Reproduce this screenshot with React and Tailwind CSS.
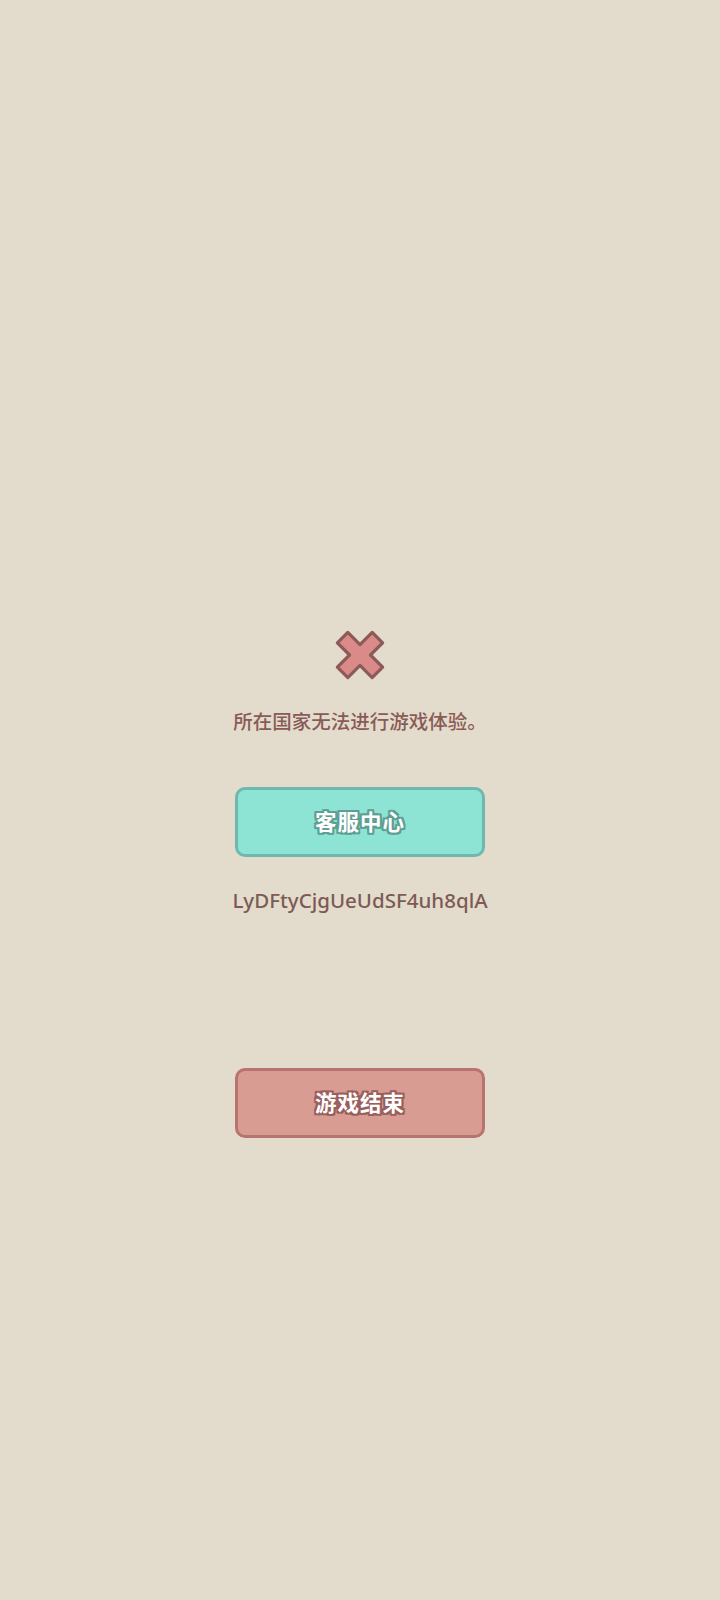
import React from 'react'

function CrossIcon() {
  return (
    <svg width="64" height="64" viewBox="0 0 52 52">
      <g transform="rotate(45 26 26)">
        <path
          d="M20 6 H32 V20 H46 V32 H32 V46 H20 V32 H6 V20 H20 Z"
          fill="#da8a88"
          stroke="#8c5a58"
          strokeWidth="2.6"
          strokeLinejoin="round"
        />
      </g>
    </svg>
  )
}

const outlineTeal = '[text-shadow:-2px_-2px_0_#5e9f93,2px_-2px_0_#5e9f93,-2px_2px_0_#5e9f93,2px_2px_0_#5e9f93,0_-2px_0_#5e9f93,0_2px_0_#5e9f93,-2px_0_0_#5e9f93,2px_0_0_#5e9f93]'
const outlineRed = '[text-shadow:-2px_-2px_0_#9a5f5c,2px_-2px_0_#9a5f5c,-2px_2px_0_#9a5f5c,2px_2px_0_#9a5f5c,0_-2px_0_#9a5f5c,0_2px_0_#9a5f5c,-2px_0_0_#9a5f5c,2px_0_0_#9a5f5c]'

export default function App() {
  return (
    <div className="w-[720px] h-[1600px] bg-[#e3dccc] flex flex-col items-center font-['Noto_Sans','Noto_Sans_CJK_SC',sans-serif]">
      <div className="mt-[623px]">
        <CrossIcon />
      </div>
      <p className="mt-[22px] text-[19.5px] leading-[26px] font-medium text-[#8a5b56]">所在国家无法进行游戏体验。</p>
      <button className={`mt-[52px] w-[250px] h-[70px] rounded-[10px] bg-[#8ee4d4] border-[3px] border-[#6fb9ac] text-white text-[21.5px] font-bold tracking-[1px] ${outlineTeal}`}>
        客服中心
      </button>
      <p className="mt-[30px] text-[20.5px] leading-[26px] font-medium text-[#7d5a55]">LyDFtyCjgUeUdSF4uh8qlA</p>
      <button className={`mt-[155px] w-[250px] h-[70px] rounded-[10px] bg-[#d99c93] border-[3px] border-[#b7736f] text-white text-[21.5px] font-bold tracking-[1px] ${outlineRed}`}>
        游戏结束
      </button>
    </div>
  )
}
